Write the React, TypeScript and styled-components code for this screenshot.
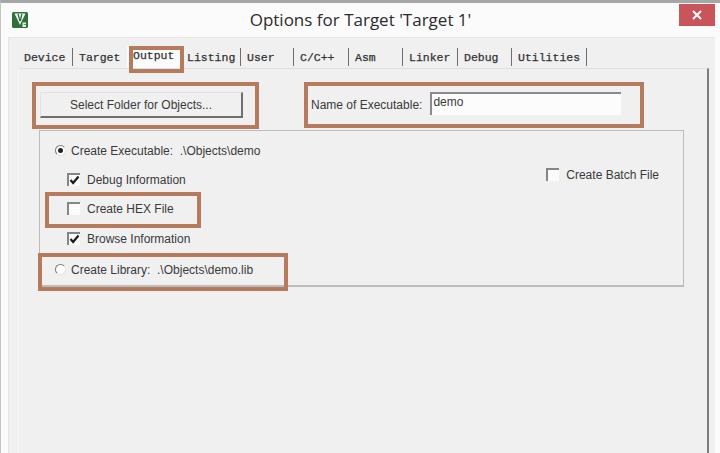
import styled, { createGlobalStyle } from 'styled-components';

const GlobalStyle = createGlobalStyle`
  html, body {
    margin: 0;
    padding: 0;
    background: #fbfbfb;
  }
`;

const Window = styled.div`
  position: relative;
  width: 720px;
  height: 453px;
  box-sizing: border-box;
  overflow: hidden;
  border-top: 3px solid #a6a6a6;
  border-left: 1px solid #c0c6c0;
  background: #fbfbfb;
  font-family: 'Liberation Sans', Arial, sans-serif;
  color: #3a3a3a;
`;

const TitleBar = styled.header`
  display: flex;
  align-items: center;
  justify-content: center;
  height: 34px;
`;

const Title = styled.h1`
  margin: 0 0 1px 0;
  font-family: 'Open Sans', sans-serif;
  font-size: 17px;
  font-weight: 400;
  color: #2c2c2c;
`;

const AppIcon = styled.svg`
  position: absolute;
  left: 11px;
  top: 9px;
  width: 16px;
  height: 16px;
`;

const CloseButton = styled.div`
  position: absolute;
  left: 678px;
  top: 1px;
  width: 36px;
  height: 22px;
  display: flex;
  align-items: center;
  justify-content: center;
  background: #c9545a;
`;

const Body = styled.main`
  height: 416px;
  margin: 0 5px 0 7px;
  padding: 5px 6px 0 9px;
  box-sizing: border-box;
  background: #f0f0f1;
  border-top: 1px solid #e6e6e6;
  border-left: 1px solid #e4e6e4;
`;

const TabRow = styled.nav`
  display: flex;
  height: 25px;
`;

const Tab = styled.div<{ $width: number; $active?: boolean; $plain?: boolean }>`
  display: flex;
  align-items: center;
  width: ${(p) => p.$width}px;
  height: ${(p) => (p.$active ? 22 : 18)}px;
  margin-top: ${(p) => (p.$active ? 3 : 5)}px;
  padding: 0 0 ${(p) => (p.$active ? 4 : 0)}px 6px;
  box-sizing: border-box;
  border-right: ${(p) => (p.$plain ? 'none' : '1px solid #6e6e6e')};
  background: ${(p) => (p.$active ? '#fbfbfb' : 'transparent')};
  font-family: 'Liberation Mono', monospace;
  font-size: 11.5px;
  -webkit-text-stroke: 0.25px #333;
  color: #333;
`;

const Pane = styled.section`
  height: 386px;
  padding: 23px 0 0 20px;
  border-top: 1px solid #e0e0e0;
  border-left: 1px solid #f8f8f8;
  border-right: 2px solid #7c7c7c;
  box-sizing: border-box;
`;

const TopRow = styled.div`
  display: flex;
  align-items: flex-start;
  height: 38px;
  padding-left: 1px;
`;

const FolderButton = styled.div`
  display: flex;
  align-items: center;
  justify-content: center;
  width: 203px;
  height: 26px;
  box-sizing: border-box;
  background: #f0f0f1;
  border-right: 2px solid #6f6f6f;
  border-bottom: 2px solid #6f6f6f;
  border-left: 1px solid #e2e2e2;
  border-top: 1px solid #e2e2e2;
  font-size: 12px;
`;

const ExecutableField = styled.div`
  display: flex;
  align-items: center;
  margin-left: 68px;
  font-size: 12px;
  height: 26px;
`;

const NameInput = styled.div`
  align-self: flex-start;
  width: 191px;
  height: 23px;
  margin-left: 8px;
  padding: 0 0 5px 1px;
  box-sizing: border-box;
  display: flex;
  align-items: center;
  background: #fcfcfc;
  border-top: 2px solid #8a8a8a;
  border-left: 2px solid #8a8a8a;
  font-size: 12px;
`;

const GroupBox = styled.div`
  display: flex;
  justify-content: space-between;
  width: 645px;
  height: 157px;
  box-sizing: border-box;
  padding: 13px 24px 0 15px;
  border: 1px solid #bcbcbc;
  border-bottom: 2px solid #bcbcbc;
`;

const OptionColumn = styled.div`
  display: flex;
  flex-direction: column;
`;

const OptionRow = styled.div<{ $indent?: number; $height: number; $top?: number }>`
  display: flex;
  align-items: center;
  height: ${(p) => p.$height}px;
  margin-top: ${(p) => p.$top ?? 0}px;
  margin-left: ${(p) => p.$indent ?? 0}px;
  font-size: 12px;
  white-space: nowrap;
`;

const Radio = styled.span<{ $checked?: boolean }>`
  position: relative;
  flex: none;
  width: 11px;
  height: 11px;
  margin-right: 5px;
  border-radius: 50%;
  box-sizing: border-box;
  background: #fff;
  border: 1px solid #e4e4e4;
  border-top-color: #7a7a7a;
  border-left-color: #7a7a7a;

  &::after {
    content: '';
    display: ${(p) => (p.$checked ? 'block' : 'none')};
    position: absolute;
    left: 2px;
    top: 2px;
    width: 5px;
    height: 5px;
    border-radius: 50%;
    background: #222;
  }
`;

const CheckBox = styled.span`
  flex: none;
  display: flex;
  width: 13px;
  height: 13px;
  margin-right: 7px;
  box-sizing: border-box;
  background: #fbfbfb;
  border-top: 2px solid #858585;
  border-left: 2px solid #858585;
`;

const Annotation = styled.div<{ $x: number; $y: number; $w: number; $h: number }>`
  position: absolute;
  left: ${(p) => p.$x - 1}px;
  top: ${(p) => p.$y - 3}px;
  width: ${(p) => p.$w}px;
  height: ${(p) => p.$h}px;
  box-sizing: border-box;
  border: 4px solid #b67b5d;
  pointer-events: none;
`;

const Tick = () => (
  <svg width="11" height="11" viewBox="0 0 11 11">
    <path d="M1.5 5l2.6 3L9.5 1.5" fill="none" stroke="#1d1d1d" strokeWidth="2.2" />
  </svg>
);

const tabs: { label: string; width: number; plain?: boolean; active?: boolean }[] = [
  { label: 'Device', width: 55 },
  { label: 'Target', width: 54, plain: true },
  { label: 'Output', width: 54, plain: true, active: true },
  { label: 'Listing', width: 60 },
  { label: 'User', width: 53 },
  { label: 'C/C++', width: 55 },
  { label: 'Asm', width: 54 },
  { label: 'Linker', width: 55 },
  { label: 'Debug', width: 54 },
  { label: 'Utilities', width: 75 },
];

export default function App() {
  return (
    <>
      <GlobalStyle />
      <Window>
        <TitleBar>
          <AppIcon viewBox="0 0 16 16">
            <rect x="0" y="0" width="16" height="16" rx="1.5" fill="#2f6f3c" />
            <path d="M2.5 1.5h11L8 13z" fill="#eef5ee" />
            <path d="M6 2l2 7M9.8 2L8.4 9" stroke="#2f6f3c" strokeWidth="1.3" fill="none" />
            <path d="M10.5 10.5h3.5v1.7h-2.2v.8H14V15h-3.5" fill="#dfeedd" />
          </AppIcon>
          <Title>Options for Target 'Target 1'</Title>
          <CloseButton>
            <svg width="10" height="10" viewBox="0 0 10 10">
              <path d="M1 1l8 8M9 1l-8 8" stroke="#fff" strokeWidth="2" />
            </svg>
          </CloseButton>
        </TitleBar>
        <Body>
          <TabRow>
            {tabs.map((t) => (
              <Tab key={t.label} $width={t.width} $plain={t.plain} $active={t.active}>
                {t.label}
              </Tab>
            ))}
          </TabRow>
          <Pane>
            <TopRow>
              <FolderButton>Select Folder for Objects...</FolderButton>
              <ExecutableField>
                Name of Executable:
                <NameInput>demo</NameInput>
              </ExecutableField>
            </TopRow>
            <GroupBox>
              <OptionColumn>
                <OptionRow $height={13}>
                  <Radio $checked />
                  Create Executable:&nbsp; .\Objects\demo
                </OptionRow>
                <OptionRow $indent={12} $height={17} $top={14}>
                  <CheckBox><Tick /></CheckBox>
                  Debug Information
                </OptionRow>
                <OptionRow $indent={12} $height={17} $top={12}>
                  <CheckBox />
                  Create HEX File
                </OptionRow>
                <OptionRow $indent={12} $height={17} $top={13}>
                  <CheckBox><Tick /></CheckBox>
                  Browse Information
                </OptionRow>
                <OptionRow $height={13} $top={16}>
                  <Radio />
                  Create Library:&nbsp; .\Objects\demo.lib
                </OptionRow>
              </OptionColumn>
              <OptionColumn>
                <OptionRow $height={17} $top={22}>
                  <CheckBox />
                  Create Batch File
                </OptionRow>
              </OptionColumn>
            </GroupBox>
          </Pane>
        </Body>
        <Annotation $x={129} $y={46} $w={55} $h={27} />
        <Annotation $x={32} $y={82} $w={227} $h={47} />
        <Annotation $x={304} $y={82} $w={340} $h={46} />
        <Annotation $x={45} $y={192} $w={156} $h={36} />
        <Annotation $x={38} $y={253} $w={250} $h={38} />
      </Window>
    </>
  );
}
